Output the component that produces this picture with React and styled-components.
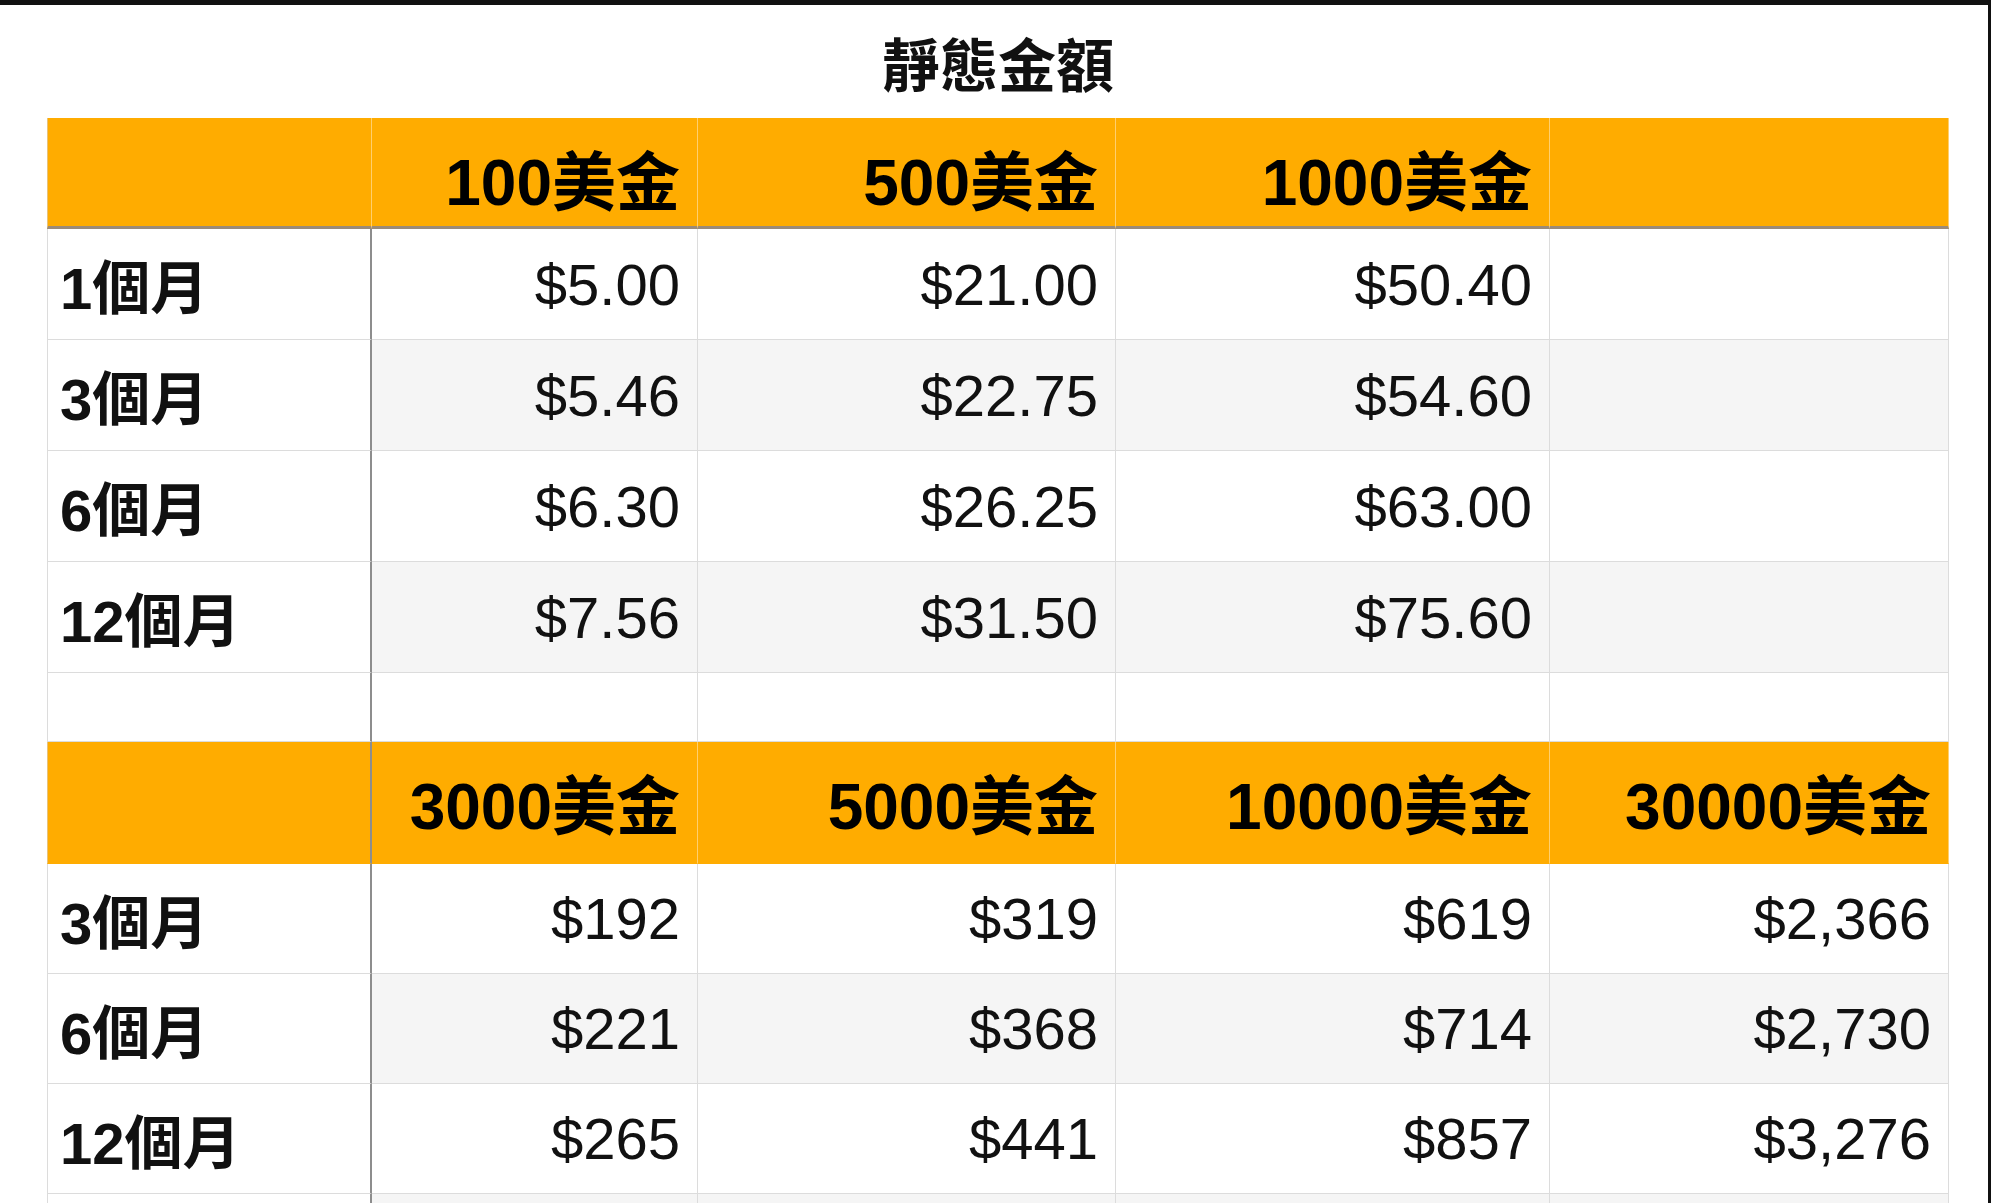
import React from "react";
import styled, { createGlobalStyle } from "styled-components";

const GlobalStyle = createGlobalStyle`
  html, body {
    margin: 0;
    padding: 0;
    background: #ffffff;
  }
  body {
    font-family: "Liberation Sans", "Noto Sans CJK TC", sans-serif;
    color: #111;
  }
`;

const Page = styled.div`
  width: 1991px;
  height: 1203px;
  box-sizing: border-box;
  border-top: 5px solid #111;
  border-right: 3px solid #111;
  background: #fff;
  overflow: hidden;
`;

const Title = styled.h1`
  margin: 0;
  height: 113px;
  display: flex;
  align-items: center;
  justify-content: center;
  font-family: "Liberation Sans", "Noto Sans CJK TC", sans-serif;
  font-size: 58px;
  font-weight: 700;
  color: #111;
  width: 1996px;
`;

const Sheet = styled.table`
  margin-left: 47px;
  width: 1902px;
  table-layout: fixed;
  border-collapse: separate;
  border-spacing: 0;
`;

const Row = styled.tr`
  height: ${(p) => p.$h}px;
`;

const Cell = styled.td`
  box-sizing: border-box;
  padding: 0 17px 0 12px;
  border-bottom: 1px solid #dcdcdc;
  border-right: 1px solid #dcdcdc;
  background: ${(p) => (p.$shade ? "#f5f5f5" : "#ffffff")};
  font-size: 58px;
  font-weight: 400;
  text-align: right;
  vertical-align: middle;
  white-space: nowrap;
  overflow: hidden;
  color: #111;
`;

const Label = styled(Cell)`
  background: #ffffff;
  border-left: 1px solid #dcdcdc;
  border-right: 2px solid #8d8d8d;
  text-align: left;
  font-weight: 700;
`;

const Head = styled(Cell)`
  background: #ffac00;
  font-size: 64px;
  font-weight: 700;
  color: #000;
  padding-top: ${(p) => (p.$rule ? 10 : 0)}px;
  padding-bottom: ${(p) => (p.$rule ? 0 : 4)}px;
  border-right: 1px solid #ffcf6e;
  border-bottom: ${(p) => (p.$rule ? "3px solid #9b8b78" : "1px solid #ffac00")};
`;

const HeadLabel = styled(Head)`
  border-left: 1px solid #e8c27a;
  border-right: ${(p) => (p.$dark ? "2px solid #8d8d8d" : "1px solid #ffcf6e")};
`;

const top = {
  cols: ["100美金", "500美金", "1000美金", ""],
  rows: [
    ["1個月", "$5.00", "$21.00", "$50.40", ""],
    ["3個月", "$5.46", "$22.75", "$54.60", ""],
    ["6個月", "$6.30", "$26.25", "$63.00", ""],
    ["12個月", "$7.56", "$31.50", "$75.60", ""],
  ],
};

const bottom = {
  cols: ["3000美金", "5000美金", "10000美金", "30000美金"],
  rows: [
    ["3個月", "$192", "$319", "$619", "$2,366"],
    ["6個月", "$221", "$368", "$714", "$2,730"],
    ["12個月", "$265", "$441", "$857", "$3,276"],
    ["", "", "", "", ""],
  ],
};

const BodyRows = ({ rows, h }) =>
  rows.map((r, i) => (
    <Row key={i} $h={h}>
      <Label>{r[0]}</Label>
      {r.slice(1).map((v, j) => (
        <Cell key={j} $shade={i % 2 === 1}>
          {v}
        </Cell>
      ))}
    </Row>
  ));

export default function App() {
  return (
    <>
      <GlobalStyle />
      <Page>
        <Title>靜態金額</Title>
        <Sheet>
          <colgroup>
            <col style={{ width: 325 }} />
            <col style={{ width: 326 }} />
            <col style={{ width: 418 }} />
            <col style={{ width: 434 }} />
            <col style={{ width: 399 }} />
          </colgroup>
          <tbody>
            <Row $h={111}>
              <HeadLabel $rule />
              {top.cols.map((c, i) => (
                <Head key={i} $rule>
                  {c}
                </Head>
              ))}
            </Row>
            <BodyRows rows={top.rows} h={111} />
            <Row $h={69}>
              <Label />
              <Cell />
              <Cell />
              <Cell />
              <Cell />
            </Row>
            <Row $h={122}>
              <HeadLabel $dark />
              {bottom.cols.map((c, i) => (
                <Head key={i}>{c}</Head>
              ))}
            </Row>
            <BodyRows rows={bottom.rows} h={110} />
          </tbody>
        </Sheet>
      </Page>
    </>
  );
}
